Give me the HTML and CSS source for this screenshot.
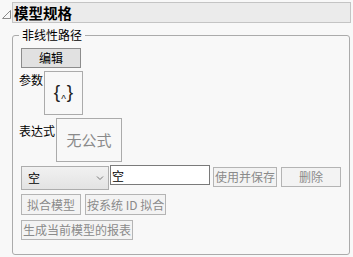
FILE: index.html
```html
<!DOCTYPE html>
<html lang="zh">
<head>
    <meta charset="UTF-8">
    <title>模型规格</title>
    <link rel="stylesheet" href="styles.css">
</head>
<body>

<div class="header">
    <svg class="toggle" width="12" height="21" viewBox="0 0 12 21">
        <path d="M2.5 16.5 L10.5 8.5 L10.5 16.5 Z" fill="none" stroke="#8a8a8a" stroke-width="1"/>
    </svg>
    <div class="title-bar">模型规格</div>
</div>

<fieldset class="group">
    <legend>非线性路径</legend>

    <button class="btn btn-main">编辑</button>

    <div class="row row-param">
        <span class="label">参数</span>
        <div class="box box-param">{<span class="caret">^</span>}</div>
    </div>

    <div class="row row-expr">
        <span class="label">表达式</span>
        <div class="box box-expr">无公式</div>
    </div>

    <div class="row row-controls">
        <div class="select">
            <span>空</span>
            <svg width="8" height="6" viewBox="0 0 8 6"><path d="M1 1.5 L4 4.5 L7 1.5" fill="none" stroke="#777" stroke-width="1"/></svg>
        </div>
        <input class="text" type="text" value="空">
        <button class="btn btn-off btn-tight">使用并保存</button>
        <button class="btn btn-off btn-del">删除</button>
    </div>

    <div class="row row-fit">
        <button class="btn btn-off btn-fit">拟合模型</button>
        <button class="btn btn-off btn-tight">按系统 ID 拟合</button>
    </div>

    <div class="row row-report">
        <button class="btn btn-off btn-tight">生成当前模型的报表</button>
    </div>
</fieldset>

</body>
</html>
```

FILE: styles.css
```css
* {
    box-sizing: border-box;
}
body {
    margin: 0;
    padding-top: 2px;
    background-color: #f8f8f8;
    font-family: "Noto Sans CJK SC", "Microsoft YaHei", sans-serif;
    font-size: 12px;
    line-height: 16px;
    color: #000;
}
.header {
    display: flex;
    height: 21px;
}
.toggle {
    flex: none;
}
.title-bar {
    flex: 1;
    margin-right: 2px;
    background-color: #ebebeb;
    border: 1px solid #c4c4c4;
    font-size: 14.5px;
    font-weight: bold;
    line-height: 19px;
    padding-left: 1px;
}
.group {
    margin: 4px 0 0 12px;
    width: 338px;
    border: 1px solid #ababab;
    border-radius: 3px;
    padding: 5px 8px 14px 6px;
}
.group legend {
    padding: 0 3px;
    margin-left: 0;
    line-height: 16px;
}
.btn {
    font-family: inherit;
    font-size: 12px;
    line-height: 16px;
    height: 20px;
    padding: 0 3px;
    border-radius: 0;
    cursor: default;
}
.btn-main {
    display: block;
    width: 60px;
    margin-left: 2px;
    background-color: #e1e1e1;
    border: 1px solid #8c8c8c;
    color: #000;
}
.btn-off {
    background-color: #f3f3f3;
    border: 1px solid #b4b4b4;
    color: #8a8a8a;
}
.btn-tight {
    padding: 0 1px;
}
.btn-del {
    width: 60px;
    margin-left: 4px;
}
.btn-fit {
    width: 60px;
}
.row {
    display: flex;
    align-items: flex-start;
}
.label {
    padding-top: 1px;
}
.box {
    border: 1px solid #ababab;
    display: flex;
    align-items: center;
    justify-content: center;
}
.row-param {
    margin-top: 3px;
}
.box-param {
    margin-left: 1px;
    width: 39px;
    height: 44px;
    font-family: "Liberation Sans", sans-serif;
    font-size: 19px;
    font-weight: normal;
    color: #222;
    padding-bottom: 2px;
}
.caret {
    font-size: 10px;
    margin: 0 1px;
    padding-top: 15px;
}
.row-expr {
    margin-top: 3px;
}
.row-expr .label {
    padding-top: 5px;
}
.box-expr {
    margin-left: 1px;
    width: 66px;
    height: 44px;
    font-size: 15px;
    color: #8a8a8a;
}
.row-controls {
    margin-top: 4px;
    margin-left: 2px;
}
.select {
    width: 88px;
    height: 24px;
    border: 1px solid #adadad;
    background: linear-gradient(#f1f1f1, #e3e3e3);
    display: flex;
    align-items: center;
    justify-content: space-between;
    padding: 0 4px 0 6px;
}
.text {
    width: 100px;
    height: 20px;
    margin: -1px 0 0 1px;
    border: 1px solid #7a7a7a;
    background-color: #fff;
    font-family: inherit;
    font-size: 12px;
    padding: 0 1px;
    outline: none;
}
.row-controls .btn-tight {
    margin: 1px 0 0 3px;
}
.row-controls .btn-del {
    margin-top: 1px;
}
.row-fit {
    margin-top: 4px;
    margin-left: 2px;
    gap: 4px;
}
.row-fit .btn {
    height: 21px;
}
.row-report {
    margin-top: 5px;
    margin-left: 2px;
}
```
